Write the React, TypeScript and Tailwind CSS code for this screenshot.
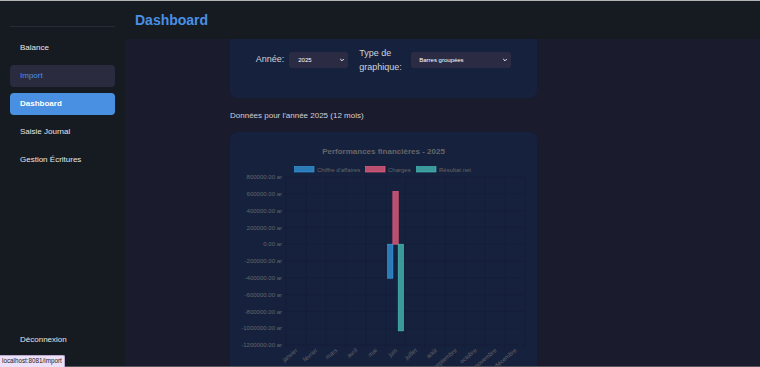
import React from "react";

const months = [
  "janvier",
  "février",
  "mars",
  "avril",
  "mai",
  "juin",
  "juillet",
  "août",
  "septembre",
  "octobre",
  "novembre",
  "décembre",
];

const ticks = [800000, 600000, 400000, 200000, 0, -200000, -400000, -600000, -800000, -1000000, -1200000];

function Chevron({ className }: { className: string }) {
  return (
    <svg viewBox="0 0 10 10" className={className} fill="none" stroke="currentColor" strokeWidth="1.6" strokeLinecap="round" strokeLinejoin="round">
      <path d="M2.5 3.8 L5 6.3 L7.5 3.8" />
    </svg>
  );
}

function Chart() {
  const plotX = 56;
  const plotW = 239;
  const colW = plotW / 12;
  const top = 45;
  const step = 16.8;
  const zeroY = top + 4 * step;
  const pxPerUnit = step / 200000;
  const cx = plotX + 5.5 * colW;
  const bw = 5.3;
  const bars = [
    { v: -405000, fill: "#2c7bb7", stroke: "#36a2eb", x: cx - 1.5 * bw },
    { v: 627000, fill: "#b94f6f", stroke: "#ff6384", x: cx - 0.5 * bw },
    { v: -1032000, fill: "#3b9999", stroke: "#4bc0c0", x: cx + 0.5 * bw },
  ];
  const font = "'Liberation Sans', Arial, sans-serif";
  return (
    <svg width="307" height="240" viewBox="0 0 307 240" style={{ fontFamily: font }}>
      <text x="153.5" y="22" textAnchor="middle" fontSize="8" fontWeight="bold" fill="#666">
        Performances financières - 2025
      </text>
      {/* legend */}
      <rect x="64.5" y="34.5" width="19.5" height="5.5" fill="#2c7bb7" stroke="#36a2eb" strokeWidth="0.6" />
      <text x="87" y="39.6" fontSize="6" fill="#666">Chiffre d'affaires</text>
      <rect x="135.5" y="34.5" width="19.5" height="5.5" fill="#b94f6f" stroke="#ff6384" strokeWidth="0.6" />
      <text x="158" y="39.6" fontSize="6" fill="#666">Charges</text>
      <rect x="186.5" y="34.5" width="19.5" height="5.5" fill="#3b9999" stroke="#4bc0c0" strokeWidth="0.6" />
      <text x="209" y="39.6" fontSize="6" fill="#666">Résultat net</text>
      {/* grid */}
      {ticks.map((t, i) => (
        <line key={"h" + t} x1={plotX - 3} x2={plotX + plotW} y1={top + i * step} y2={top + i * step} stroke="rgba(0,0,0,0.14)" strokeWidth="0.6" />
      ))}
      {Array.from({ length: 13 }).map((_, k) => (
        <line key={"v" + k} x1={plotX + k * colW} x2={plotX + k * colW} y1={top} y2={top + 10 * step + 3} stroke="rgba(0,0,0,0.14)" strokeWidth="0.6" />
      ))}
      {ticks.map((t, i) => (
        <text key={"t" + t} x="52" y={top + i * step + 2.1} textAnchor="end" fontSize="6" fill="#666">
          {t.toFixed(2)} ar
        </text>
      ))}
      {bars.map((b, i) => {
        const y1 = zeroY;
        const y2 = zeroY - b.v * pxPerUnit;
        const y = Math.min(y1, y2);
        const h = Math.abs(y2 - y1);
        return <rect key={i} x={b.x} y={y} width={bw} height={h} fill={b.fill} stroke={b.stroke} strokeWidth="0.6" />;
      })}
      {months.map((m, k) => {
        const x = plotX + (k + 0.5) * colW + 2;
        const y = top + 10 * step + 6;
        return (
          <text key={m} x={x} y={y} textAnchor="end" fontSize="6" fill="#666" transform={`rotate(-40 ${x} ${y})`}>
            {m}
          </text>
        );
      })}
    </svg>
  );
}

export default function App() {
  return (
    <div className="relative w-[760px] h-[367px] overflow-hidden flex flex-col bg-[#1b1b2e] font-['Liberation_Sans',Arial,sans-serif]">
      <div className="h-px bg-[#b4b4b4] shrink-0" />
      <div className="flex flex-1 min-h-0">
        <aside className="w-[125px] shrink-0 bg-[#161b22] flex flex-col px-[10px] pb-[15px]">
          <div className="h-[26px] border-b border-[#262b34]" />
          <nav className="mt-[10px] flex flex-col gap-[6px] text-[8px]">
            <div className="h-[22px] flex items-center px-[10px] rounded-[4px] text-[#e6e6e6]">Balance</div>
            <div className="h-[22px] flex items-center px-[10px] rounded-[4px] bg-[#2b2b40] text-[#4a90e2]">Import</div>
            <div className="h-[22px] flex items-center px-[10px] rounded-[4px] bg-[#4a90e2] text-white font-bold">Dashboard</div>
            <div className="h-[22px] flex items-center px-[10px] rounded-[4px] text-[#e6e6e6]">Saisie Journal</div>
            <div className="h-[22px] flex items-center px-[10px] rounded-[4px] text-[#e6e6e6]">Gestion Écritures</div>
          </nav>
          <div className="mt-auto h-[22px] flex items-center px-[10px] text-[8px] text-[#e6e6e6]">Déconnexion</div>
        </aside>
        <div className="flex-1 flex flex-col min-w-0">
          <header className="h-[38px] shrink-0 bg-[#161b22] flex items-center px-[10px] relative z-10">
            <h1 className="text-[14px] font-bold text-[#4a90e2] leading-none">Dashboard</h1>
          </header>
          <main className="flex-1 min-h-0 overflow-hidden pl-[105px]">
            <div className="w-[307px] -mt-[20px]">
              <div className="bg-[#16213e] rounded-[8px] pt-[27px] pb-[24px] flex items-center justify-center">
                <div className="flex items-center h-[28px] text-[9px] text-[#d2d2d8]">
                  <span className="mr-[5px]">Année:</span>
                  <div className="relative w-[59px] h-[16px] mr-[11px]">
                    <select className="appearance-none w-full h-full bg-[#2b2c44] text-white text-[6px] pl-[9px] rounded-[3px] outline-none border-0">
                      <option>2025</option>
                    </select>
                    <Chevron className="absolute right-[3px] top-[5px] w-[6px] h-[6px] text-white pointer-events-none" />
                  </div>
                  <span className="leading-[14px] mr-[10px] w-[42px]">
                    Type de
                    <br />
                    graphique:
                  </span>
                  <div className="relative w-[100px] h-[16px]">
                    <select className="appearance-none w-full h-full bg-[#2b2c44] text-white text-[6px] pl-[8px] rounded-[3px] outline-none border-0">
                      <option>Barres groupées</option>
                    </select>
                    <Chevron className="absolute right-[3px] top-[5px] w-[6px] h-[6px] text-white pointer-events-none" />
                  </div>
                </div>
              </div>
              <p className="mt-[12px] h-[12px] leading-[12px] text-[8px] text-[#d0d0d6]">Données pour l'année 2025 (12 mois)</p>
              <div className="mt-[10px] bg-[#16213e] rounded-[8px] h-[260px]">
                <Chart />
              </div>
            </div>
          </main>
        </div>
      </div>
      <div className="h-px bg-[#55555f] shrink-0" />
      <div className="absolute left-0 bottom-0 h-[12px] px-[2px] flex items-center bg-[#ecdff8] border-t border-r border-[#b9a9cf] rounded-tr-[2px] text-[6.3px] text-[#222] leading-none">
        localhost:8081/import
      </div>
    </div>
  );
}
